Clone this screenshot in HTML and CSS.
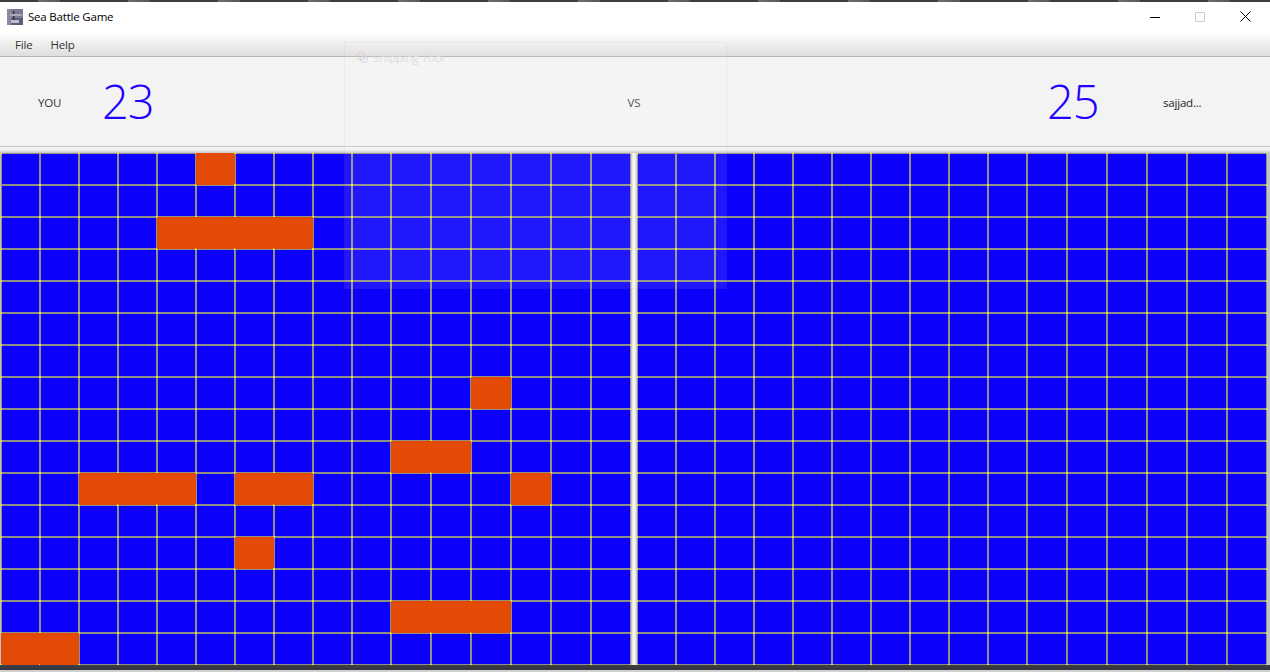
FILE: index.html
```html
<!DOCTYPE html>
<html>
<head>
  <meta charset="UTF-8"/>
  <title>Sea Battle Game</title>
  <link rel="stylesheet" href="styles.css">
</head>
<body>
<div id="desktop-top"></div>
<div id="titlebar">
  <svg class="app-icon" width="16" height="16" viewBox="0 0 16 16">
    <rect width="16" height="16" fill="#7a7a92"/>
    <rect y="9" width="16" height="7" fill="#56607a"/>
    <rect x="0" y="0" width="4" height="16" fill="#8b89a0"/>
    <rect x="6" y="2" width="1.5" height="11" fill="#34353e"/>
    <rect x="3" y="5" width="12" height="2" fill="#a9a9b8"/>
    <rect x="4" y="11" width="8" height="3" fill="#c4bfc6"/>
  </svg>
  <span class="app-title">Sea Battle Game</span>
  <div class="win-controls">
    <svg class="win-btn" width="10" height="10" viewBox="0 0 10 10"><path d="M0 5.5h10" stroke="#000" fill="none"/></svg>
    <svg class="win-btn" width="10" height="10" viewBox="0 0 10 10"><path d="M.5.5h9v9h-9z" stroke="#ccc" fill="none"/></svg>
    <svg class="win-btn" width="11" height="11" viewBox="0 0 11 11"><path d="M.5.5l10 10M10.5.5l-10 10" stroke="#000" fill="none"/></svg>
  </div>
</div>
<div id="menubar">
  <span class="menu-item">File</span>
  <span class="menu-item">Help</span>
</div>
<div id="scorebar">
  <div class="side">
    <span class="player">YOU</span>
    <span class="score">23</span>
  </div>
  <span class="versus">VS</span>
  <div class="side side-right">
    <span class="score">25</span>
    <span class="player player-right">sajjad...</span>
  </div>
</div>
<div id="boards">
  <div class="board" id="board-you"></div>
  <div class="board-gap"></div>
  <div class="board" id="board-rival"></div>
</div>
<div id="desktop-bottom"></div>

<div id="ghost-window">
  <svg width="13" height="13" viewBox="0 0 13 13" class="ghost-icon">
    <circle cx="5" cy="5" r="4" fill="none" stroke="#e8c8c8"/>
    <circle cx="8" cy="8" r="3.5" fill="none" stroke="#c8d8e8"/>
  </svg>
  <span class="ghost-title">Snipping Tool</span>
</div>

<script src="game.js"></script>
</body>
</html>
```

FILE: styles.css
```css
* { padding: 0; margin: 0; box-sizing: border-box; }

html, body { height: 672px; overflow: hidden; }

body { font: 11.5px/16px "Open Sans", "Noto Sans", sans-serif; letter-spacing: -.2px; color: #333; background: #d0d0d0; }

/* ==========window chrome========== */
#desktop-top { height: 2px; background: repeating-linear-gradient(90deg, #3b3f3f 0, #3b3f3f 38px, #6d7072 38px, #55585c 60px, #3b3f3f 60px, #3b3f3f 90px); }

#titlebar { height: 31px; display: flex; align-items: center; padding: 0 0 2px 7px; background: #fff; }
.app-icon { flex: none; margin-right: 5px; }
.app-title { color: #000; }
.win-controls { margin-left: auto; display: flex; align-items: center; padding-right: 19px; gap: 35px; }

#menubar { height: 24px; display: flex; align-items: center; gap: 18px; padding: 1px 0 0 15px; border-bottom: 1px solid #b4b4b4; background: linear-gradient(#fdfdfd, #dedede); }
.menu-item { color: #333; }

/* ==========score========== */
#scorebar { height: 90px; display: grid; grid-template-columns: 1fr auto 1fr; align-items: center; padding: 0 38px; background: #f3f3f3; border-bottom: 1px solid #c6c6c6; }
.side { display: flex; align-items: center; }
.side-right { justify-content: flex-end; }
.player { width: 65px; padding-top: 2px; }
.player-right { width: 69px; color: #222; }
.score { width: 50px; padding-bottom: 2px; margin-left: -1px; font-size: 47px; line-height: 60px; font-weight: 350; letter-spacing: -1px; color: #2200ff; }
.side-right .score { margin-right: 66px; }
.versus { padding: 2px 2px 0 0; color: #444; }

/* ==========boards========== */
#boards { display: flex; height: 518px; padding: 6px 3px 0 1px; background: linear-gradient(#f4f4f4 0, #f0f0f0 3px, #c4c4c4 6px); }
.board { height: 512px; display: grid; grid-template-columns: repeat(10, 37px) repeat(6, 38px); grid-auto-rows: 30px; gap: 2px; padding: 1px; overflow: hidden; background: #8f8f85; }
.board-gap { width: 6px; background: linear-gradient(90deg, #b9b9b9, #f8f8f8 35%, #f4f4f4 65%, #c4c4c4); }
.cell { position: relative; background: #0c00fb; }
.cell::after { content: ""; position: absolute; right: -2px; bottom: -2px; width: 2px; height: 2px; background: #e4e43c; }
.cell:nth-child(-n+16)::before { content: ""; position: absolute; right: -2px; top: -1px; width: 2px; height: 1px; background: #e4e43c; }
.cell:nth-child(16n+1)::before { content: ""; position: absolute; left: -1px; bottom: -2px; width: 1px; height: 2px; background: #e4e43c; }
.cell.hit { background: #e24a06; box-shadow: 0 0 0 1px #e24a06; }

#desktop-bottom { height: 7px; margin-top: -2px; background: linear-gradient(#c8c8c8 0, #c8c8c8 2px, #3c4046 2px, #33363c 100%); }

/* ==========window behind, shining through========== */
#ghost-window { position: absolute; left: 344px; top: 42px; width: 383px; height: 247px; padding: 7px 11px; display: flex; align-items: flex-start; background: rgba(255, 255, 255, .09); border: 1px solid rgba(0, 0, 0, .04); pointer-events: none; }
.ghost-icon { margin: 1px 4px 0 0; }
.ghost-title { color: #dcdcdc; letter-spacing: -.1px; }
```

FILE: game.js
```js
// row -> columns with a hit, the other board has none yet
var hits = {
	0: [5],
	2: [4, 5, 6, 7],
	7: [12],
	9: [10, 11],
	10: [2, 3, 4, 6, 7, 13],
	12: [6],
	14: [10, 11, 12],
	15: [0, 1]
};

function fill(board, marks) {
	for (var r = 0; r < 16; r++) {
		for (var c = 0; c < 16; c++) {
			var cell = document.createElement('div');
			cell.className = 'cell';
			if (marks[r] && marks[r].indexOf(c) > -1) cell.className += ' hit';
			board.appendChild(cell);
		}
	}
}

fill(document.getElementById('board-you'), hits);
fill(document.getElementById('board-rival'), {});
```
